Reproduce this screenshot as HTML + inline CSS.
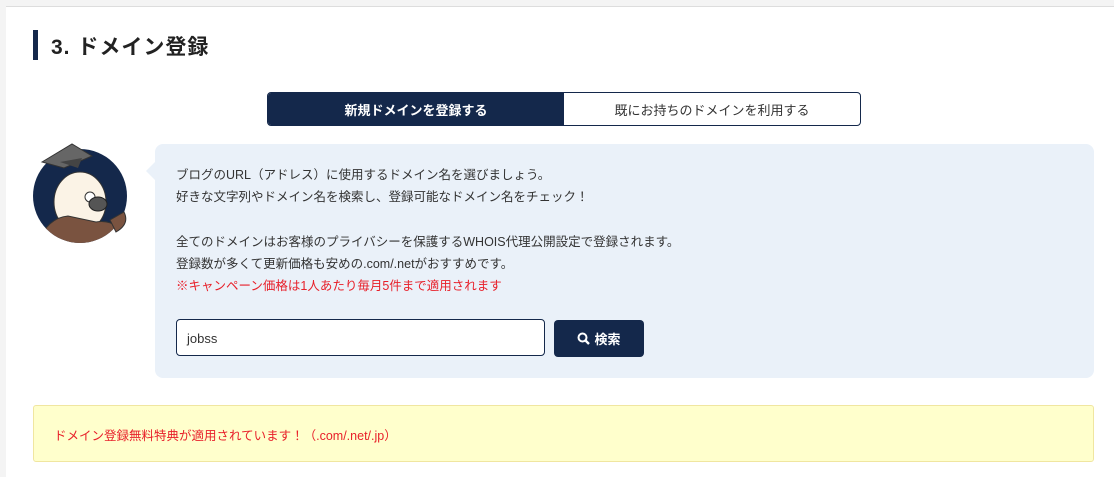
<!DOCTYPE html>
<html><head><meta charset="utf-8"><style>
*{margin:0;padding:0;box-sizing:border-box}
body{width:1114px;height:477px;background:#f4f4f4;font-family:"Liberation Sans","Noto Sans CJK JP",sans-serif;position:relative;overflow:hidden;color:#333}
.main{position:absolute;left:6px;top:6px;right:0;bottom:0;background:#fff;border-top:1px solid #ddd}
.bar{position:absolute;left:33px;top:30px;width:5px;height:30px;background:#14284b}
h1{position:absolute;left:51px;top:31px;font-size:21px;font-weight:bold;color:#222;letter-spacing:1px}
.tabs{position:absolute;left:267px;top:92px;width:594px;height:34px;border:1px solid #14284b;border-radius:4px;display:flex;overflow:hidden;font-size:13px}
.tabs div{flex:1;display:flex;align-items:center;justify-content:center}
.t1{background:#14284b;color:#fff;font-weight:bold}
.bubble{position:absolute;left:155px;top:144px;width:939px;height:234px;background:#eaf1f9;border-radius:8px}
.bubble:before{content:"";position:absolute;left:-9px;top:18px;border-style:solid;border-width:9px 9px 9px 0;border-color:transparent #eaf1f9 transparent transparent}
.txt{position:absolute;left:21px;top:20px;font-size:12.5px;line-height:22.3px;color:#333}
.red{color:#e8202a}
.inp{position:absolute;left:21px;top:175px;width:369px;height:37px;background:#fff;border:1px solid #14284b;border-radius:4px;font-size:13px;padding:11px 0 0 10px}
.btn{position:absolute;left:399px;top:176px;width:90px;height:37px;background:#14284b;border-radius:4px;color:#fff;font-size:13px;font-weight:bold;display:flex;align-items:center;justify-content:center;gap:4px}
.yel{position:absolute;left:33px;top:405px;width:1061px;height:57px;background:#ffffcc;border:1px solid #f0e6a0;border-radius:3px;color:#e8202a;font-size:12.5px;padding:19px 0 0 20px}
</style></head><body>
<div class="main"></div>
<div class="bar"></div>
<h1>3. ドメイン登録</h1>
<div class="tabs"><div class="t1">新規ドメインを登録する</div><div>既にお持ちのドメインを利用する</div></div>
<svg style="position:absolute;left:30px;top:140px" width="102" height="105" viewBox="0 0 102 105">
<circle cx="50" cy="56" r="47" fill="#14284b"/>
<clipPath id="c"><circle cx="50" cy="56" r="47"/></clipPath>
<g clip-path="url(#c)">
<ellipse cx="50" cy="62" rx="26" ry="30" fill="#fbf3e6" stroke="#333" stroke-width="1"/>
<path d="M5 110 Q15 78 38 76 L66 82 Q92 78 100 110Z" fill="#7a5340" stroke="#333"/>
</g>
<path d="M94 72 Q100 84 86 92 L80 80Z" fill="#7a5340" stroke="#333"/>
<path d="M12 22 L42 4 L62 16 L34 28Z" fill="#666" stroke="#333"/>
<path d="M30 22 L48 28 L52 18Z" fill="#444"/>
<circle cx="60" cy="57" r="5" fill="#fff" stroke="#333"/>
<ellipse cx="68" cy="64" rx="9" ry="7" fill="#555" stroke="#222"/>
</svg>
<div class="bubble">
<div class="txt">ブログのURL（アドレス）に使用するドメイン名を選びましょう。<br>好きな文字列やドメイン名を検索し、登録可能なドメイン名をチェック！<br><br>全てのドメインはお客様のプライバシーを保護するWHOIS代理公開設定で登録されます。<br>登録数が多くて更新価格も安めの.com/.netがおすすめです。<br><span class="red">※キャンペーン価格は1人あたり毎月5件まで適用されます</span></div>
<div class="inp">jobss</div>
<div class="btn"><svg width="13" height="13" viewBox="0 0 13 13"><circle cx="5.5" cy="5.5" r="4" fill="none" stroke="#fff" stroke-width="2"/><path d="M8.5 8.5L12 12" stroke="#fff" stroke-width="2.4"/></svg>検索</div>
</div>
<div class="yel">ドメイン登録無料特典が適用されています！（.com/.net/.jp）</div>
</body></html>
